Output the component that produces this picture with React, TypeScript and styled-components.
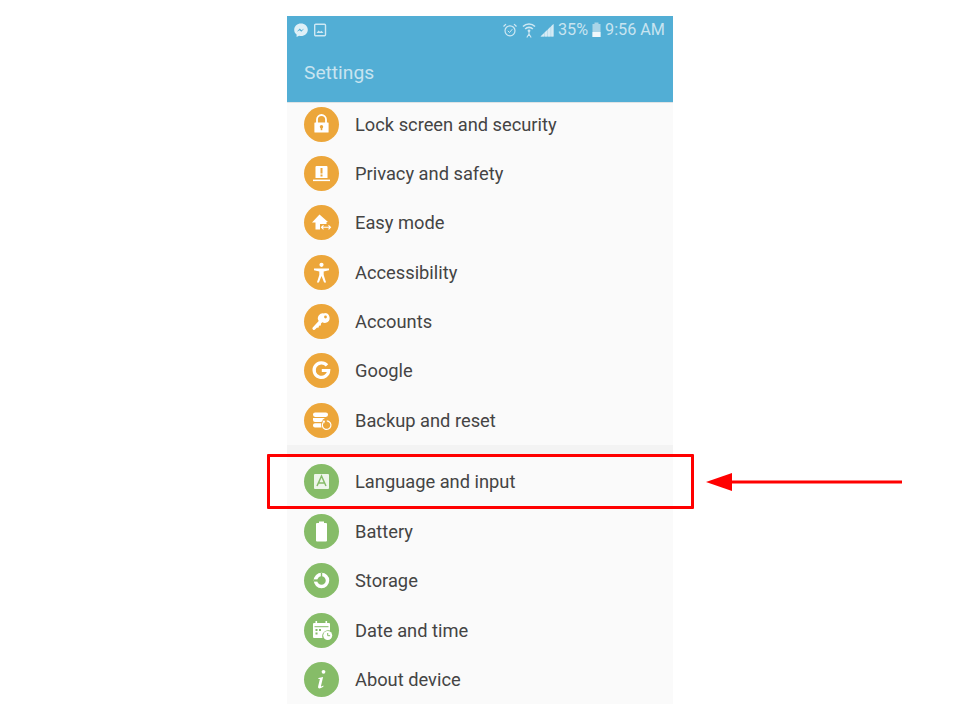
import { ReactNode } from "react";
import styled, { createGlobalStyle } from "styled-components";

const orange = "#eca63a";
const green = "#86bc68";

const GlobalStyle = createGlobalStyle`
    body {
        margin: 0;
        background: #fff;
        font-family: Roboto, "Liberation Sans", sans-serif;
    }
`;

const LockIcon = () => (
    <svg width="35" height="35" viewBox="0 0 35 35">
        <path d="M13 16v-3.500a4.500 4.500 0 0 1 9 0V16" fill="none" stroke="#fff" strokeWidth="1.800" />
        <path d="M11 15.500h13a.6.6 0 0 1 .6.6V25a.6.6 0 0 1-.6.6H11a.6.6 0 0 1-.6-.6v-8.900a.6.6 0 0 1 .6-.6z" fill="#fff" />
        <circle cx="17.500" cy="19.800" r="1.700" fill={orange} />
        <rect x="16.700" y="20" width="1.600" height="3.200" fill={orange} />
    </svg>
);

const PrivacyIcon = () => (
    <svg width="35" height="35" viewBox="0 0 35 35">
        <path d="M12.500 10h10a1 1 0 0 1 1 1v11h-12V11a1 1 0 0 1 1-1z" fill="#fff" />
        <rect x="16.500" y="12" width="2" height="5.500" fill={orange} />
        <rect x="16.500" y="18.500" width="2" height="2" fill={orange} />
        <rect x="9" y="23.600" width="17" height="1.500" fill="#fff" />
    </svg>
);

const EasyModeIcon = () => (
    <svg width="35" height="35" viewBox="0 0 35 35">
        <path d="M15.500 9.500l8.500 7.500h-1.500V19h-6.500v5.500h-4.500V17.500H8z" fill="#fff" />
        <path d="M17.500 22.300h9M19.500 20.300l-2 2 2 2M24.500 20.300l2 2-2 2" fill="none" stroke="#fff" strokeWidth="1.100" />
    </svg>
);

const AccessibilityIcon = () => (
    <svg width="35" height="35" viewBox="0 0 35 35">
        <circle cx="17.500" cy="9.800" r="2.100" fill="#fff" />
        <path d="M10 13.500h15v1.800l-5.300 1.100V20l2.400 7.500h-2l-2.600-6.500-2.600 6.500h-2l2.400-7.500v-3.600l-5.300-1.100z" fill="#fff" />
    </svg>
);

const KeyIcon = () => (
    <svg width="35" height="35" viewBox="0 0 35 35">
        <path
            d="M20.500 9a5 5 0 0 1 1.500 9.800 5 5 0 0 1-3.700-.5l-1.300 1.300-.2 1.900-1.900.2-.2 1.900-1.900.2-1.500 1.500a1.500 1.500 0 0 1-2.600-1.800l6-6.500a5 5 0 0 1 5.800-7.500z"
            fill="#fff"
        />
        <circle cx="21.500" cy="13" r="1.400" fill={orange} />
    </svg>
);

const GoogleIcon = () => (
    <svg width="35" height="35" viewBox="0 0 35 35">
        <path d="M23 12.400a7.300 7.300 0 1 0 1.700 5.100H17.800" fill="none" stroke="#fff" strokeWidth="3.200" />
    </svg>
);

const BackupIcon = () => (
    <svg width="35" height="35" viewBox="0 0 35 35">
        <rect x="9" y="9.500" width="15" height="4.400" rx="2.100" fill="#fff" />
        <path d="M9 15h12a6.500 6.500 0 0 0-3.500 4H11a2 2 0 0 1-2-2z" fill="#fff" />
        <path d="M11 20.200h6.200a6.500 6.500 0 0 0 .3 4.300H11a2 2 0 0 1-2-2v-.4a2 2 0 0 1 2-1.900z" fill="#fff" />
        <path d="M22.800 17.800a4.300 4.300 0 1 1-3.500 1.600" fill="none" stroke="#fff" strokeWidth="1.200" />
        <path d="M18 17.500l3.200.3-1.100 2.700z" fill="#fff" />
    </svg>
);

const LanguageIcon = () => (
    <svg width="35" height="35" viewBox="0 0 35 35">
        <rect x="10" y="10" width="15" height="15" rx="1" fill="#eef6ea" />
        <path d="M13 22l4.500-10 4.500 10M14.500 19h6" fill="none" stroke={green} strokeWidth="1.500" />
    </svg>
);

const BatteryIcon = () => (
    <svg width="35" height="35" viewBox="0 0 35 35">
        <path d="M15 7.500h5v1.500h2a1 1 0 0 1 1 1v16.500a1 1 0 0 1-1 1h-9a1 1 0 0 1-1-1V10a1 1 0 0 1 1-1h2z" fill="#fff" />
    </svg>
);

const StorageIcon = () => (
    <svg width="35" height="35" viewBox="0 0 35 35">
        <circle cx="17.500" cy="17.500" r="6" fill="none" stroke="#fff" strokeWidth="3.500" />
        <rect x="16.800" y="10" width="1.400" height="6" fill={green} />
        <rect x="10" y="16.400" width="6" height="2.200" fill={green} />
        <circle cx="17.500" cy="17.500" r="1.900" fill={green} />
    </svg>
);

const DateIcon = () => (
    <svg width="35" height="35" viewBox="0 0 35 35">
        <path d="M10 10h15a1 1 0 0 1 1 1v6.500a6 6 0 0 0-7.500 7.500H10a1 1 0 0 1-1-1V11a1 1 0 0 1 1-1z" fill="#fff" />
        <rect x="11.500" y="8" width="1.600" height="3" fill="#fff" />
        <rect x="21.500" y="8" width="1.600" height="3" fill="#fff" />
        <rect x="10.500" y="13.200" width="14" height="1" fill={green} />
        <rect x="11.500" y="16" width="2" height="2" fill={green} />
        <rect x="15" y="16" width="2" height="2" fill={green} />
        <rect x="11.500" y="19.500" width="2" height="2" fill={green} />
        <circle cx="23.700" cy="22.500" r="4.500" fill="#fff" />
        <path d="M23.700 20v2.700h2.400" fill="none" stroke={green} strokeWidth="1" />
    </svg>
);

const InfoIcon = () => (
    <svg width="35" height="35" viewBox="0 0 35 35">
        <circle cx="19.500" cy="9.800" r="1.900" fill="#fff" />
        <path d="M14.500 16l4.600-1-2.100 9c-.1.800.5.900 2.200-.4l.4.700c-2.800 2.600-6 2.900-5.500.2l1.800-7.500-1.600.1z" fill="#fff" />
    </svg>
);

type Item = { label: string; icon: ReactNode };

const orangeItems: Item[] = [
    { label: "Lock screen and security", icon: <LockIcon /> },
    { label: "Privacy and safety", icon: <PrivacyIcon /> },
    { label: "Easy mode", icon: <EasyModeIcon /> },
    { label: "Accessibility", icon: <AccessibilityIcon /> },
    { label: "Accounts", icon: <KeyIcon /> },
    { label: "Google", icon: <GoogleIcon /> },
    { label: "Backup and reset", icon: <BackupIcon /> },
];

const greenItems: Item[] = [
    { label: "Language and input", icon: <LanguageIcon /> },
    { label: "Battery", icon: <BatteryIcon /> },
    { label: "Storage", icon: <StorageIcon /> },
    { label: "Date and time", icon: <DateIcon /> },
    { label: "About device", icon: <InfoIcon /> },
];

export default function App() {
    return (
        <>
            <GlobalStyle />
            <Phone>
                <Header>
                    <StatusBar>
                        <StatusGroup>
                            <svg width="16" height="16" viewBox="0 0 16 16">
                                <path d="M8 1.500c3.800 0 6.800 2.700 6.800 6.200S11.800 14 8 14c-.7 0-1.300-.1-1.900-.3L3.600 15v-2.500C2 11.300 1.200 9.600 1.200 7.700 1.200 4.200 4.200 1.500 8 1.500z" fill="#dff0f7" />
                                <path d="M3.800 9.800l3-3.200 1.600 1.600 2.900-1.600-3 3.200-1.600-1.600z" fill="#52aed5" />
                            </svg>
                            <svg width="14" height="14" viewBox="0 0 14 14">
                                <rect x="1.700" y="1.200" width="10.800" height="11.600" rx="1" fill="none" stroke="#cfe8f3" strokeWidth="1.400" />
                                <path d="M3.500 10l2-2.500 1.600 1.300 1.400-1 2 2.200z" fill="#cfe8f3" />
                            </svg>
                        </StatusGroup>
                        <StatusGroup>
                            <svg width="16" height="16" viewBox="0 0 16 16">
                                <circle cx="8" cy="8.800" r="5" fill="none" stroke="#cfe8f3" strokeWidth="1.200" />
                                <path d="M5.800 8.800l1.700 1.700 2.800-3.300" fill="none" stroke="#cfe8f3" strokeWidth="1" />
                                <path d="M1.500 4.500l2.500-2.400M14.500 4.500L12 2.100" stroke="#cfe8f3" strokeWidth="1.300" />
                            </svg>
                            <svg width="14" height="16" viewBox="0 0 14 16">
                                <path d="M1 4.500a8.500 8.500 0 0 1 12 0M3.200 7a5.300 5.300 0 0 1 7.600 0" fill="none" stroke="#cfe8f3" strokeWidth="1.600" />
                                <circle cx="7" cy="8.800" r="1.400" fill="#cfe8f3" />
                                <path d="M7 10v4M4.800 15.500l2.200-3.500 2.200 3.500" fill="none" stroke="#cfe8f3" strokeWidth="1.100" />
                            </svg>
                            <svg width="14" height="14" viewBox="0 0 14 14">
                                <path d="M.5 13.500L13.500 1V13.500z" fill="#a9d5e8" />
                                <path d="M.5 13.500L4 10.200V13.500zM4.600 13.500V9.600L7.300 7V13.500zM7.900 13.500V6.400L10.600 3.800V13.500zM11.200 13.500V3.200L13.500 1V13.500z" fill="#d6ebf5" />
                            </svg>
                            <StatusText>35%</StatusText>
                            <svg width="9" height="15" viewBox="0 0 9 15">
                                <rect x="0.500" y="2" width="8" height="13" fill="#a9d5e8" />
                                <rect x="2.500" y="0.500" width="4" height="1.500" fill="#a9d5e8" />
                                <rect x="0.500" y="10" width="8" height="5" fill="#f0f8fb" />
                            </svg>
                            <StatusText>9:56 AM</StatusText>
                        </StatusGroup>
                    </StatusBar>
                    <Title>Settings</Title>
                </Header>
                <ListClip>
                    <Group>
                        {orangeItems.map((item) => (
                            <Row key={item.label}>
                                <IconCircle $color={orange}>{item.icon}</IconCircle>
                                <Label>{item.label}</Label>
                            </Row>
                        ))}
                    </Group>
                    <Divider />
                    <Group>
                        {greenItems.map((item, i) => (
                            <Row key={item.label}>
                                <IconCircle $color={green}>{item.icon}</IconCircle>
                                <Label>{item.label}</Label>
                                {i === 0 && <Highlight />}
                                {i === 0 && (
                                    <Arrow width="198" height="20" viewBox="0 0 198 20">
                                        <path d="M0 10L26 1V19z" fill="#ff0000" />
                                        <rect x="24" y="8.500" width="172" height="3" fill="#ff0000" />
                                    </Arrow>
                                )}
                            </Row>
                        ))}
                    </Group>
                </ListClip>
            </Phone>
        </>
    );
}

const Phone = styled.div`
    width: 386px;
    height: 688px;
    margin: 16px auto 0;
    background: #fafafa;
`;

const Header = styled.header`
    height: 87px;
    background: #52aed5;
    border-bottom: 1px solid #dfe3e5;
    box-sizing: border-box;
    color: #c8e4f0;
`;

const StatusBar = styled.div`
    height: 27px;
    padding: 0 8px 0 6px;
    display: flex;
    align-items: center;
    justify-content: space-between;
`;

const StatusGroup = styled.div`
    display: flex;
    align-items: center;
    gap: 4px;
`;

const StatusText = styled.span`
    font-size: 16.2px;
`;

const Title = styled.div`
    padding: 17px 0 0 17px;
    font-size: 19.2px;
    line-height: 26px;
`;

const ListClip = styled.div`
    height: 601px;
    overflow: hidden;
`;

const Group = styled.div`
    &:first-child {
        margin-top: -3.700px;
    }
`;

const Divider = styled.div`
    height: 12.200px;
    background: #f3f3f3;
`;

const Row = styled.div`
    height: 49.400px;
    padding-left: 16.500px;
    display: flex;
    align-items: center;
    gap: 16.500px;
`;

const IconCircle = styled.span<{ $color: string }>`
    width: 35px;
    height: 35px;
    flex: none;
    border-radius: 50%;
    background: ${(p) => p.$color};
    display: flex;
    svg {
        display: block;
    }
`;

const Label = styled.span`
    font-size: 18.300px;
    color: #444;
`;

const Highlight = styled.div`
    position: absolute;
    left: 267px;
    top: 454px;
    width: 427px;
    height: 55px;
    box-sizing: border-box;
    border: 3px solid #ff0000;
    border-radius: 1px;
`;

const Arrow = styled.svg`
    position: absolute;
    left: 706px;
    top: 471.500px;
`;
